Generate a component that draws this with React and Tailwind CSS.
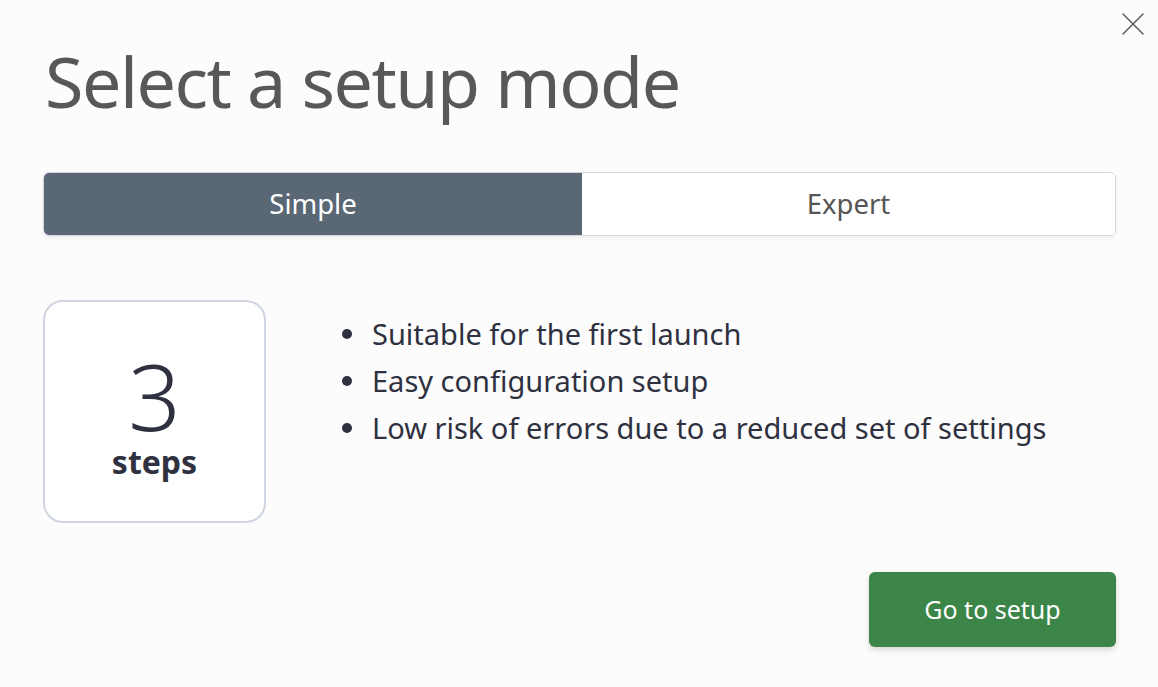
import { X } from "lucide-react";

const items = [
  "Suitable for the first launch",
  "Easy configuration setup",
  "Low risk of errors due to a reduced set of settings",
];

export default function App() {
  return (
    <div
      className="relative h-[687px] w-[1158px] bg-[#fcfcfd] px-[43px] pt-[33px] text-[#2f3140]"
      style={{ fontFamily: '"Noto Sans", "Open Sans", sans-serif' }}
    >
      <button className="absolute right-[5px] top-[4px] text-[#5b5b5b]">
        <X size={40} strokeWidth={0.9} />
      </button>

      <h1 className="pl-[2px] text-[70px] leading-[96px] tracking-[-1.5px] text-[#585856]">
        Select a setup mode
      </h1>

      {/* Mode tabs */}
      <div className="mt-[43px] flex h-[64px] w-[1073px] overflow-hidden rounded-[6px] border border-[#d6d7de] shadow-[0_2px_4px_rgba(0,0,0,0.06)]">
        <div className="flex w-[538px] items-center justify-center bg-[#5a6775] text-[27.5px] text-white">
          Simple
        </div>
        <div className="flex flex-1 items-center justify-center bg-white text-[27.5px] text-[#555]">
          Expert
        </div>
      </div>

      {/* Details */}
      <div className="mt-[64px] flex">
        <div className="flex h-[223px] w-[223px] flex-col items-center justify-center rounded-[20px] border-2 border-[#cfd5e0] bg-white pt-[10px]">
          <div className="text-[92px] font-light leading-[84px]">3</div>
          <div className="mt-[6px] text-[32px] font-bold leading-[36px]">steps</div>
        </div>
        <ul className="ml-[76px] mt-[10px] flex flex-col">
          {items.map((t) => (
            <li key={t} className="flex items-center text-[29px] leading-[47px]">
              <span className="mr-[20px] h-[10px] w-[10px] rounded-full bg-[#2f3140]" />
              {t}
            </li>
          ))}
        </ul>
      </div>

      <div className="mt-[49px] flex w-[1073px] justify-end">
        <button className="h-[75px] w-[247px] rounded-[6px] bg-[#3b8548] text-[25px] text-white shadow-[0_3px_6px_rgba(0,0,0,0.15)]">
          Go to setup
        </button>
      </div>
    </div>
  );
}
